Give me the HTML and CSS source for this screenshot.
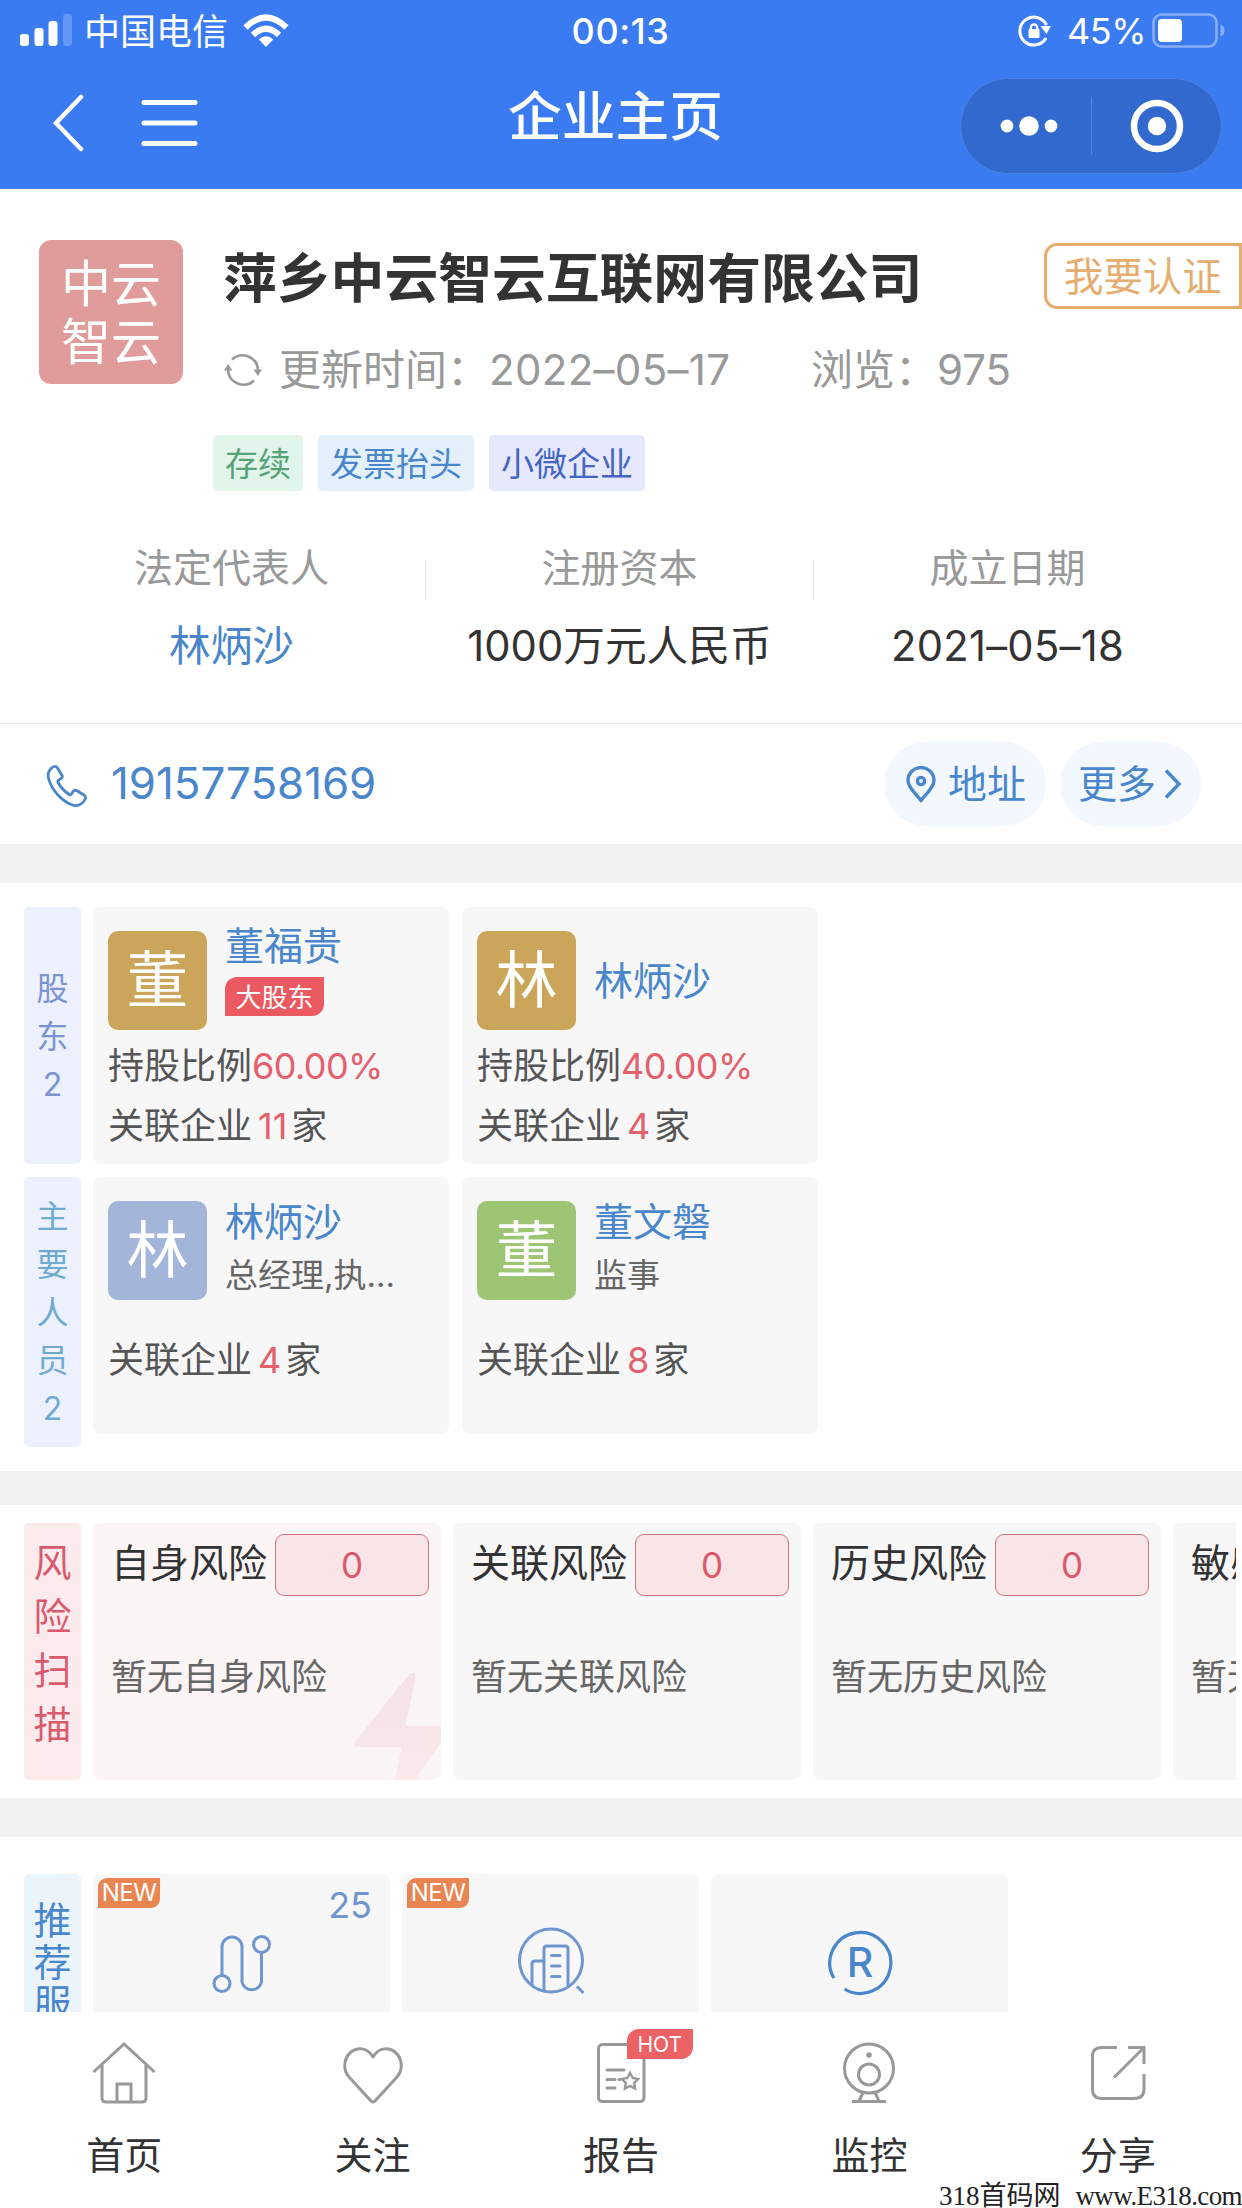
FILE: index.html
```html
<!DOCTYPE html>
<html lang="zh-CN">
<head>
<meta charset="utf-8">
<title>企业主页</title>
<link rel="stylesheet" href="styles.css">
</head>
<body>
<header class="header">
  <div class="status">
    <div class="status-left">
      <svg width="54" height="34" viewBox="0 0 54 34" fill="#fff"><rect x="0" y="20" width="9" height="12" rx="3"/><rect x="14.500" y="14" width="9" height="18" rx="3"/><rect x="28.500" y="7" width="9" height="25" rx="3"/><rect x="43" y="0" width="9" height="32" rx="3" opacity=".2"/></svg>
      <span class="carrier">中国电信</span>
      <svg class="wifi" width="46" height="34" viewBox="0 0 46 34" fill="none" stroke="#fff" stroke-width="6"><path d="M2.500 13.500Q23-6.500 43.500 13.500"/><path d="M10 21Q23 8.500 36 21"/><path d="M15.800 25.500Q23 19 30.200 25.500L23 33Z" fill="#fff" stroke="none"/></svg>
    </div>
    <div class="clock">00:13</div>
    <div class="status-right">
      <svg width="34" height="36" viewBox="0 0 34 36" fill="none" stroke="#fff" stroke-width="3"><path d="M28 25A14 14 0 1 1 28.500 12"/><path d="M22.500 13H33L28.500 21Z" fill="#fff" stroke="none"/><rect x="10.500" y="16" width="11" height="9" rx="1" fill="#fff" stroke="none"/><path d="M12.800 17v-2.500a3.200 3.200 0 0 1 6.400 0V17" stroke-width="2.200"/></svg>
      <span class="percent">45%</span>
      <svg width="74" height="36" viewBox="0 0 74 36"><rect x="1.500" y="1.500" width="63" height="32" rx="8" fill="none" stroke="#fff" stroke-width="2.500" opacity=".4"/><rect x="6" y="6" width="24" height="23" rx="4" fill="#fff"/><path d="M68.500 11.500q4 1.500 4 6t-4 6z" fill="#fff" opacity=".4"/></svg>
    </div>
  </div>
  <nav class="nav">
    <div class="nav-left">
      <svg width="32" height="58" viewBox="0 0 32 58" fill="none" stroke="#fff" stroke-width="4.500" stroke-linecap="round"><path d="M29 3L4 29L29 55"/></svg>
      <svg width="58" height="48" viewBox="0 0 58 48" stroke="#fff" stroke-width="5" stroke-linecap="round"><path d="M3 3.500H54M3 24H54M3 44.500H54"/></svg>
    </div>
    <h1 class="title">企业主页</h1>
    <div class="capsule">
      <svg width="58" height="22" viewBox="0 0 58 22" fill="#fff"><circle cx="7" cy="11" r="6.400"/><circle cx="29" cy="11" r="9.800"/><circle cx="51" cy="11" r="6.400"/></svg>
      <i class="capsule-line"></i>
      <svg width="54" height="54" viewBox="0 0 54 54"><circle cx="27" cy="27" r="23" fill="none" stroke="#fff" stroke-width="6.500"/><circle cx="27" cy="27" r="9.200" fill="#fff"/></svg>
    </div>
  </nav>
</header>

<main class="content">
  <section class="profile">
    <div class="logo">中云<br>智云</div>
    <div class="profile-body">
      <h2 class="company">萍乡中云智云互联网有限公司</h2>
      <div class="meta">
        <svg width="38" height="36" viewBox="0 0 38 36" fill="none" stroke="#999" stroke-width="2.600"><path d="M8 7.500A15.500 15.500 0 0 1 34 18"/><path d="M30 28.500A15.500 15.500 0 0 1 4 18"/><path d="M29.500 17.500H38L33.800 24Z M0 18.500H8.500L4 12Z" fill="#999" stroke="none"/></svg>
        <span class="updated">更新时间：<span class="date">2022–05–17</span></span><span>浏览：975</span>
      </div>
      <div class="tags"><span class="tag tag-green">存续</span><span class="tag tag-blue">发票抬头</span><span class="tag tag-indigo">小微企业</span></div>
    </div>
    <div class="certify">我要认证</div>
  </section>

  <section class="facts">
    <div class="fact"><div class="fact-label">法定代表人</div><div class="fact-value link">林炳沙</div></div>
    <i class="fact-line"></i>
    <div class="fact"><div class="fact-label">注册资本</div><div class="fact-value">1000万元人民币</div></div>
    <i class="fact-line"></i>
    <div class="fact"><div class="fact-label">成立日期</div><div class="fact-value date">2021–05–18</div></div>
  </section>

  <section class="contact">
    <svg class="phone-icon" width="42" height="44" viewBox="0 0 42 44" fill="none" stroke="#4a86cc" stroke-width="2.800" stroke-linejoin="round"><path d="M8 2.500C4 4 1 9 2.500 14.500C6 27 17 38.500 28 41.500C33 42.500 38 38.500 39.500 34.500C40 33 39 32 38 31L30.500 26.500C29 25.800 28 26.200 27 27.500L25.500 30C24.500 31 23.500 31 22.500 30C18 27 14.500 23 12.200 18.500C11.600 17.300 11.800 16.500 13 15.800L15.300 14.300C16.500 13.500 16.500 12.500 16 11.500L11.500 4C10.500 2.500 9.500 2 8 2.500Z"/></svg>
    <span class="phone">19157758169</span>
    <div class="pill pill-address">
      <svg width="30" height="37" viewBox="0 0 30 37" fill="none" stroke="#4a86cc" stroke-width="3.400"><path d="M15 34.500C12 30 2 22 2 14.500a13 13 0 0 1 26 0C28 22 18 30 15 34.500Z" stroke-linejoin="round"/><circle cx="15" cy="15" r="3.600"/></svg>
      <span>地址</span>
    </div>
    <div class="pill pill-more"><span>更多</span>
      <svg width="18" height="32" viewBox="0 0 18 32" fill="none" stroke="#4a86cc" stroke-width="3.400"><path d="M2 2.500L15 16L2 29.500"/></svg>
    </div>
  </section>

  <section class="people">
    <div class="row">
      <div class="side side-holder"><span>股</span><span>东</span><span>2</span></div>
      <article class="person">
        <div class="person-top"><div class="avatar gold">董</div><div class="person-id"><div class="name">董福贵</div><div class="badge">大股东</div></div></div>
        <p class="stat">持股比例<b>60.00%</b></p>
        <p class="stat">关联企业<b class="count">11</b>家</p>
      </article>
      <article class="person">
        <div class="person-top"><div class="avatar gold">林</div><div class="person-id solo"><div class="name">林炳沙</div></div></div>
        <p class="stat">持股比例<b>40.00%</b></p>
        <p class="stat">关联企业<b class="count">4</b>家</p>
      </article>
    </div>
    <div class="row">
      <div class="side side-staff"><span>主</span><span>要</span><span>人</span><span>员</span><span>2</span></div>
      <article class="person staff">
        <div class="person-top"><div class="avatar violet">林</div><div class="person-id"><div class="name">林炳沙</div><div class="role">总经理,执...</div></div></div>
        <p class="stat">关联企业<b class="count">4</b>家</p>
      </article>
      <article class="person staff">
        <div class="person-top"><div class="avatar green">董</div><div class="person-id"><div class="name">董文磐</div><div class="role">监事</div></div></div>
        <p class="stat">关联企业<b class="count">8</b>家</p>
      </article>
    </div>
  </section>

  <section class="risks">
    <div class="side side-risk"><span>风</span><span>险</span><span>扫</span><span>描</span></div>
    <div class="risk-list">
      <article class="risk risk-self">
        <div class="risk-head"><span>自身风险</span><b class="risk-count">0</b></div><p class="risk-note">暂无自身风险</p>
        <svg class="bolt" width="88" height="108" viewBox="0 0 88 108"><defs><linearGradient id="bolt" x1="0" y1="0" x2="0" y2="1"><stop offset="0" stop-color="#f5e1e4"/><stop offset="1" stop-color="#fae8ea"/></linearGradient></defs><path d="M58 1Q62 0 63 3L53 52Q52 54 55 54H86L88 56V70L62 108H42L48 78Q49 75 46 75H4Q0 74 2 70L53 6Z" fill="url(#bolt)"/></svg>
      </article>
      <article class="risk"><div class="risk-head"><span>关联风险</span><b class="risk-count">0</b></div><p class="risk-note">暂无关联风险</p></article>
      <article class="risk"><div class="risk-head"><span>历史风险</span><b class="risk-count">0</b></div><p class="risk-note">暂无历史风险</p></article>
      <article class="risk"><div class="risk-head"><span>敏感风险</span></div><p class="risk-note">暂无敏感风险</p></article>
    </div>
  </section>

  <section class="services">
    <div class="side side-service"><span>推</span><span>荐</span><span>服</span></div>
    <article class="service">
      <span class="new">NEW</span><span class="total">25</span>
      <svg width="60" height="72" viewBox="0 0 60 72" fill="none" stroke="#7096d0" stroke-width="3"><circle cx="10" cy="57.500" r="8"/><circle cx="49.500" cy="18.500" r="8"/><path d="M10 49.500V21a10 10 0 0 1 20 0V56a10 10 0 0 0 19.500 0V26.500"/></svg>
    </article>
    <article class="service">
      <span class="new">NEW</span>
      <svg width="68" height="72" viewBox="0 0 68 72" fill="none" stroke="#7096d0" stroke-width="3"><circle cx="34" cy="34.500" r="31.500"/><path d="M27 65V23q0-3 3-3H48q3 0 3 3V61M27 35H18q-3 0-3 3V59"/><path d="M34.500 29.500H43M34.500 40H43M34.500 50.500H43" stroke-linecap="round"/><path d="M60 60.500L66.500 67"/></svg>
    </article>
    <article class="service">
      <svg width="66" height="72" viewBox="0 0 66 72" fill="none" stroke="#4a86cc" stroke-width="3.200"><path d="M6.800 52A30.500 30.500 0 1 1 17.500 63"/><text x="33" y="51" font-family="Inter" font-size="41" font-weight="500" text-anchor="middle" fill="#4a86cc" stroke="none">R</text></svg>
    </article>
  </section>
</main>

<footer class="tabbar">
  <div class="tab"><svg width="66" height="66" viewBox="0 0 66 66" fill="none" stroke="#999" stroke-width="3"><path d="M2.500 33L33 5L63.500 33"/><path d="M11 26V59q0 4 4 4H51q4 0 4-4V26"/><path d="M26 63V45H40V63"/></svg><span>首页</span></div>
  <div class="tab"><svg width="66" height="66" viewBox="0 0 66 66" fill="none" stroke="#999" stroke-width="3" stroke-linejoin="round"><path d="M33 18C27 8 17 8 11 13C3 20 3 31 9 38L31 62Q33 64 35 62L57 38C63 31 63 20 55 13C49 8 39 8 33 18Z"/></svg><span>关注</span></div>
  <div class="tab"><svg width="66" height="66" viewBox="0 0 66 66" fill="none" stroke="#999" stroke-width="3"><rect x="10.500" y="5.500" width="45.500" height="57" rx="4"/><path d="M19 31H36M19 40.500H27M19 49H27M31 40.500H32" stroke-linecap="round"/><path d="M42 34L44.700 39L50 40L46.200 44L47 49.500L42 47L37 49.500L37.800 44L34 40L39.300 39Z" stroke-width="2.500"/></svg><span>报告</span><em class="hot">HOT</em></div>
  <div class="tab"><svg width="66" height="66" viewBox="0 0 66 66" fill="none" stroke="#999" stroke-width="3"><circle cx="33" cy="29.500" r="24.500"/><circle cx="33" cy="35.500" r="10.500"/><circle cx="33" cy="16" r="2.800" fill="#999" stroke="none"/><path d="M27 53.500L23 62M39 53.500L43 62M16 62.500H50"/></svg><span>监控</span></div>
  <div class="tab"><svg width="66" height="66" viewBox="0 0 66 66" fill="none" stroke="#999" stroke-width="3"><path d="M32 8.500H17Q7.500 8.500 7.500 17V50Q7.500 59.500 17 59.500H49Q59 59.500 59 50V35M29 38.500L59 8.500M43 8.500H59V25"/></svg><span>分享</span></div>
  <div class="watermark"><span>318首码网</span> <span class="site">www.E318.com</span></div>
</footer>
</body>
</html>
```
FILE: styles.css
```css
* { box-sizing: border-box; margin: 0; padding: 0; }
body {
  width: 1242px; height: 2208px; overflow: hidden;
  display: flex; flex-direction: column;
  font-family: Inter, "Noto Sans CJK SC", sans-serif;
  background: #fff; color: #333;
}
svg { display: block; flex: none; }
i, em { font-style: normal; }
b { font-weight: 400; }

.header { flex: none; height: 189px; background: #3b7bf2; color: #fff; }
.status { height: 62px; display: grid; grid-template-columns: 1fr auto 1fr; align-items: center; padding: 0 16px 0 20px; }
.status-left, .status-right { display: flex; align-items: center; }
.status-right { justify-content: flex-end; }
.carrier { margin-left: 10px; font-size: 36px; line-height: 60px; padding-top: 2px; }
.wifi { margin-left: 15px; }
.clock { font-size: 36px; font-weight: 500; letter-spacing: .6px; margin-left: -5px; }
.percent { margin: 0 6px 0 15px; font-size: 36px; letter-spacing: -.5px; }
.nav { height: 127px; display: grid; grid-template-columns: 1fr auto 1fr; align-items: center; padding: 0 20px 0 52px; }
.nav-left { display: flex; align-items: center; gap: 57px; margin-top: -6px; }
.title { font-size: 53.700px; font-weight: 500; line-height: 76px; margin: -17px 0 0 -43px; }
.capsule {
  justify-self: end; width: 262px; height: 96px; border-radius: 48px;
  display: flex; align-items: center; padding: 0 37px 0 39px; justify-content: space-between;
  background: #3269cf; border: 1px solid #4d83e2;
}
.capsule-line { width: 1px; height: 58px; margin-right: 5px; background: #5484dc; }

.content { flex: 1; min-height: 0; overflow: hidden; display: flex; flex-direction: column; }
.content > section { flex: none; }
.profile { height: 351px; display: flex; padding: 51px 0 0 39px; }
.logo {
  width: 144px; height: 144px; border-radius: 12px; padding-top: 15px;
  background: #e09c9b; color: #fff; text-align: center; font-size: 50px; line-height: 58px; font-weight: 400;
}
.profile-body { flex: 1; margin-left: 40px; white-space: nowrap; }
.company { font-size: 53.8px; line-height: 78px; font-weight: 700; }
.meta { display: flex; align-items: center; margin: 22px 0 0 1px; line-height: 60px; font-size: 42px; color: #999; }
.meta svg { margin-right: 17px; }
.updated { width: 532px; }
.date { letter-spacing: .3px; }
.tags { display: flex; gap: 15px; margin: 35px 0 0 -10px; }
.tag { height: 56px; padding: 0 12px; border-radius: 5px; font-size: 33px; line-height: 59px; }
.tag-green { background: #e2f5ea; color: #55a377; }
.tag-blue { background: #e3f0fc; color: #4885cb; }
.tag-indigo { background: #e6e9fb; color: #4465c2; }
.certify {
  flex: none; width: 198px; height: 66px; margin-top: 3px; padding-left: 17px;
  border: 3px solid #e6ad70; border-radius: 13px 0 0 13px;
  font-size: 39.4px; line-height: 62px; color: #e6ad70; white-space: nowrap;
}
.facts { display: flex; height: 184px; padding: 0 41px 0 38px; border-bottom: 1px solid #e8e8e8; text-align: center; }
.fact { flex: 1; }
.fact-line { width: 1px; height: 40px; margin-top: 20px; background: #e6e6e6; }
.fact-label { font-size: 39px; line-height: 56px; color: #999; }
.fact-value { margin-top: 20px; font-size: 41.7px; line-height: 60px; white-space: nowrap; }
.link, .name { color: #4a86cc; }
.contact { height: 120px; display: flex; align-items: center; padding: 0 41px 0 46px; color: #4a86cc; }
.phone-icon { margin-top: 4px; }
.phone { flex: 1; margin: -1px 0 0 23px; font-size: 43.8px; }
.pill { display: flex; align-items: center; height: 84px; border-radius: 42px; background: #f3f8fe; font-size: 39px; line-height: 84px; }
.pill-address { width: 162px; padding-left: 22px; gap: 12px; }
.pill-more { width: 141px; margin-left: 14px; padding-left: 18px; gap: 8px; }

.people, .risks, .services { border-top: 39px solid #f2f2f2; }
.people { height: 627px; padding: 24px; display: flex; flex-direction: column; gap: 13px; }
.row { display: flex; align-items: flex-start; }
.side { flex: none; width: 57px; margin-right: 12px; border-radius: 5px; display: flex; flex-direction: column; align-items: center; }
.side-holder, .side-staff { background: #ecf1fd; font-size: 32px; line-height: 48px; }
.side-holder { height: 257px; padding-top: 58px; color: #7b93cf; }
.side-staff { height: 270px; padding-top: 16px; color: #6fabd0; }
.person { width: 356px; height: 257px; padding: 24px 15px 0; border-radius: 8px; background: #f7f7f7; }
.person + .person { margin-left: 13px; }
.person-top { display: flex; height: 105px; }
.avatar { flex: none; width: 99px; height: 99px; border-radius: 10px; color: #fff; text-align: center; font-size: 62px; line-height: 99px; }
.gold { background: #cba65a; }
.violet { background: #a4b5da; }
.green { background: #9dc573; }
.person-id { margin: -11px 0 0 18px; }
.name { font-size: 39px; line-height: 52px; }
.solo { padding-top: 35px; }
.badge { width: 99px; height: 39px; margin: 5px 0 0 0; border-radius: 12px 0 12px 0; background: #ea5a60; color: #fff; font-size: 26px; line-height: 41px; text-align: center; }
.staff .person-id { margin-top: -5px; }
.role { font-size: 33px; line-height: 52px; margin-top: 1px; color: #666; white-space: nowrap; }
.stat { font-size: 36px; line-height: 60px; color: #555; }
.stat b { color: #e3606e; letter-spacing: -.6px; }
.stat .count { margin: 0 4px 0 6px; letter-spacing: 0; }
.staff .stat { margin-top: 24px; }

.risks { height: 327px; display: flex; padding: 18px 6px 0 24px; border-top-width: 34px; }
.side-risk { height: 257px; padding-top: 12px; background: #fbebed; color: #d95a6e; font-size: 38px; line-height: 54px; }
.risk-list { flex: 1; min-width: 0; overflow: hidden; display: flex; gap: 12px; }
.risk { position: relative; flex: none; width: 348px; height: 257px; padding: 11px 12px 0 18px; border-radius: 8px; background: #f7f7f7; white-space: nowrap; overflow: hidden; }
.risk-self { background: #fbf5f6; }
.risk-head { display: flex; height: 62px; align-items: center; justify-content: space-between; font-size: 39px; line-height: 58px; }
.risk-head span { margin-top: -5px; }
.risk-count { width: 154px; height: 62px; border: 1.5px solid #cd7584; border-radius: 9px; background: #f9e4e6; color: #d9596c; text-align: center; font-size: 35px; line-height: 60px; }
.risk-note { position: relative; z-index: 1; margin-top: 53px; font-size: 36px; line-height: 56px; color: #666; }
.bolt { position: absolute; right: 0; bottom: 0; }

.services { display: flex; padding: 37px 0 0 24px; }
.side-service { height: 280px; padding-top: 26px; background: #ebf4fb; color: #4a86cc; font-size: 38px; line-height: 41.500px; }
.service { position: relative; width: 297px; height: 280px; margin-right: 12px; padding-top: 52px; display: flex; justify-content: center; align-items: flex-start; border-radius: 8px; background: #f7f7f7; }
.new { position: absolute; left: 5px; top: 4px; width: 62px; height: 30px; border-radius: 9px 0 9px 0; background: #e98550; color: #fff; font-size: 24px; line-height: 30px; text-align: center; letter-spacing: -.5px; }
.total { position: absolute; right: 18px; top: 9px; font-size: 36px; line-height: 44px; color: #7096d0; }

.tabbar { position: relative; flex: none; height: 196px; display: flex; background: #fff; }
.tab { position: relative; flex: 1; display: flex; flex-direction: column; align-items: center; padding-top: 27px; font-size: 38px; line-height: 56px; }
.tab span { margin-top: 22px; }
.hot { position: absolute; left: 130px; top: 17px; width: 66px; height: 30px; border-radius: 12px 0 12px 0; background: #ec6264; color: #fff; font-size: 21px; line-height: 31px; text-align: center; }
.watermark { position: absolute; left: 939px; right: 0; bottom: -5px; display: flex; justify-content: space-between; font-family: "Liberation Serif", "Noto Sans CJK SC", serif; font-size: 27px; line-height: 34px; color: #222; white-space: nowrap; }
.site { letter-spacing: -.6px; }
```
